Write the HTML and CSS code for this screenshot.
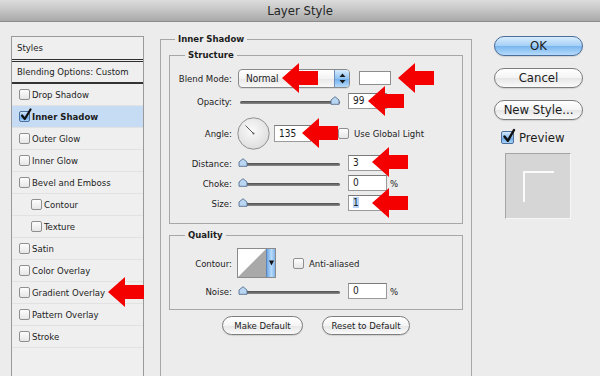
FILE: index.html
```html
<!DOCTYPE html>
<html>
<head>
<meta charset="utf-8">
<title>Layer Style</title>
<link rel="stylesheet" href="styles.css">
</head>
<body>
<div class="window">
  <div class="titlebar">Layer Style</div>
  <div class="content">
    <div class="styles-panel">
      <div class="sp-head">Styles</div>
      <div class="sp-blend">Blending Options: Custom</div>
      <div class="sp-item"><span class="cb"></span>Drop Shadow</div>
      <div class="sp-item selected"><span class="cb checked"><svg class="check" width="12" height="14" viewBox="0 0 12 14"><path d="M2 7.5 L4.8 11 L10.5 1.5" fill="none" stroke="#111" stroke-width="2.2" stroke-linecap="round" stroke-linejoin="round"/></svg></span>Inner Shadow</div>
      <div class="sp-item"><span class="cb"></span>Outer Glow</div>
      <div class="sp-item"><span class="cb"></span>Inner Glow</div>
      <div class="sp-item"><span class="cb"></span>Bevel and Emboss</div>
      <div class="sp-item indent"><span class="cb"></span>Contour</div>
      <div class="sp-item indent"><span class="cb"></span>Texture</div>
      <div class="sp-item"><span class="cb"></span>Satin</div>
      <div class="sp-item"><span class="cb"></span>Color Overlay</div>
      <div class="sp-item"><span class="cb"></span>Gradient Overlay</div>
      <div class="sp-item"><span class="cb"></span>Pattern Overlay</div>
      <div class="sp-item"><span class="cb"></span>Stroke</div>
    </div>

    <fieldset class="group main-group">
      <legend class="legend-main">Inner Shadow</legend>

      <fieldset class="group sub structure">
        <legend class="legend-sub">Structure</legend>
        <div class="row r-blend">
          <span class="lbl">Blend Mode:</span>
          <div class="select">
            <span class="select-text">Normal</span>
            <span class="stepper"><svg width="7" height="11" viewBox="0 0 7 11"><path d="M3.5 0.5 L6.5 4 L0.5 4 Z M3.5 10.5 L6.5 7 L0.5 7 Z" fill="#1a1a1a"/></svg></span>
          </div>
          <span class="color-swatch"></span>
        </div>
        <div class="row r-opacity">
          <span class="lbl">Opacity:</span>
          <div class="slider"><div class="track"></div><svg class="thumb" style="left:92px" width="10" height="9" viewBox="0 0 10 9"><path d="M1 4 L5 0.7 L9 4 L9 8.3 L1 8.3 Z" fill="#b9d6f3" stroke="#56718f" stroke-width="0.9"/></svg></div>
          <span class="field">99</span>
        </div>
        <div class="row r-angle">
          <span class="lbl">Angle:</span>
          <svg class="dial" width="33" height="33" viewBox="0 0 33 33">
            <defs><radialGradient id="dg" cx="0.45" cy="0.4" r="0.65"><stop offset="0" stop-color="#fafafa"/><stop offset="1" stop-color="#dcdcdc"/></radialGradient></defs>
            <circle cx="16.5" cy="16.5" r="15.7" fill="url(#dg)" stroke="#8f8f8f" stroke-width="1"/>
            <line x1="16.5" y1="16.5" x2="8.5" y2="8.5" stroke="#555" stroke-width="1"/>
            <circle cx="16.5" cy="16.5" r="1.1" fill="#666"/>
          </svg>
          <span class="field angle-field">135</span>
          <span class="cb gl-cb"></span>
          <span class="cb-label">Use Global Light</span>
        </div>
        <div class="row r-small r-first">
          <span class="lbl">Distance:</span>
          <div class="slider"><div class="track"></div><svg class="thumb" style="left:0px" width="10" height="9" viewBox="0 0 10 9"><path d="M1 4 L5 0.7 L9 4 L9 8.3 L1 8.3 Z" fill="#b9d6f3" stroke="#56718f" stroke-width="0.9"/></svg></div>
          <span class="field">3</span>
        </div>
        <div class="row r-small">
          <span class="lbl">Choke:</span>
          <div class="slider"><div class="track"></div><svg class="thumb" style="left:0px" width="10" height="9" viewBox="0 0 10 9"><path d="M1 4 L5 0.7 L9 4 L9 8.3 L1 8.3 Z" fill="#b9d6f3" stroke="#56718f" stroke-width="0.9"/></svg></div>
          <span class="field">0</span>
          <span class="pct">%</span>
        </div>
        <div class="row r-small">
          <span class="lbl">Size:</span>
          <div class="slider"><div class="track"></div><svg class="thumb" style="left:0px" width="10" height="9" viewBox="0 0 10 9"><path d="M1 4 L5 0.7 L9 4 L9 8.3 L1 8.3 Z" fill="#b9d6f3" stroke="#56718f" stroke-width="0.9"/></svg></div>
          <span class="field"><span class="sel">1</span></span>
        </div>
      </fieldset>

      <fieldset class="group sub quality">
        <legend class="legend-sub">Quality</legend>
        <div class="row r-contour">
          <span class="lbl">Contour:</span>
          <div class="contour">
            <svg class="contour-curve" width="28" height="28" viewBox="0 0 28 28"><rect width="28" height="28" fill="#fff"/><path d="M0 28 L28 0 L28 28 Z" fill="#a9a9a9"/></svg>
            <span class="contour-drop"><svg width="5" height="6" viewBox="0 0 5 6"><path d="M0 0.5 L5 0.5 L2.5 5.5 Z" fill="#111"/></svg></span>
          </div>
          <span class="cb aa-cb"></span>
          <span class="cb-label">Anti-aliased</span>
        </div>
        <div class="row r-noise">
          <span class="lbl">Noise:</span>
          <div class="slider"><div class="track"></div><svg class="thumb" style="left:0px" width="10" height="9" viewBox="0 0 10 9"><path d="M1 4 L5 0.7 L9 4 L9 8.3 L1 8.3 Z" fill="#b9d6f3" stroke="#56718f" stroke-width="0.9"/></svg></div>
          <span class="field">0</span>
          <span class="pct">%</span>
        </div>
      </fieldset>

      <div class="btn-row">
        <button class="pill small make">Make Default</button>
        <button class="pill small reset">Reset to Default</button>
      </div>
    </fieldset>

    <div class="side">
      <button class="pill big ok">OK</button>
      <button class="pill big">Cancel</button>
      <button class="pill big">New Style...</button>
      <div class="preview-row">
        <span class="cb checked big-cb"><svg class="check" width="14" height="16" viewBox="0 0 14 16"><path d="M2.5 8.5 L5.8 12.8 L12 2" fill="none" stroke="#111" stroke-width="2.4" stroke-linecap="round" stroke-linejoin="round"/></svg></span>
        <span class="preview-label">Preview</span>
      </div>
      <div class="preview-swatch"><div class="preview-inner"></div></div>
    </div>
  </div>

  <svg class="arrow a1" width="36" height="30" viewBox="0 0 36 30"><path d="M0 15 L17 0 L17 8 L36 8 L36 22 L17 22 L17 30 Z" fill="#f40000"/></svg>
  <svg class="arrow a2" width="36" height="30" viewBox="0 0 36 30"><path d="M0 15 L17 0 L17 8 L36 8 L36 22 L17 22 L17 30 Z" fill="#f40000"/></svg>
  <svg class="arrow a3" width="36" height="30" viewBox="0 0 36 30"><path d="M0 15 L17 0 L17 8 L36 8 L36 22 L17 22 L17 30 Z" fill="#f40000"/></svg>
  <svg class="arrow a4" width="36" height="30" viewBox="0 0 36 30"><path d="M0 15 L17 0 L17 8 L36 8 L36 22 L17 22 L17 30 Z" fill="#f40000"/></svg>
  <svg class="arrow a5" width="36" height="30" viewBox="0 0 36 30"><path d="M0 15 L17 0 L17 8 L36 8 L36 22 L17 22 L17 30 Z" fill="#f40000"/></svg>
  <svg class="arrow a6" width="36" height="30" viewBox="0 0 36 30"><path d="M0 15 L17 0 L17 8 L36 8 L36 22 L17 22 L17 30 Z" fill="#f40000"/></svg>
  <svg class="arrow a7" width="36" height="30" viewBox="0 0 36 30"><path d="M0 15 L17 0 L17 8 L36 8 L36 22 L17 22 L17 30 Z" fill="#f40000"/></svg>
</div>
</body>
</html>
```

FILE: styles.css
```css
* { box-sizing: border-box; }
html, body { margin: 0; padding: 0; }
body {
  font-family: "DejaVu Sans Condensed", "DejaVu Sans", sans-serif;
  font-stretch: condensed;
  font-size: 9.5px;
  color: #1c1c1c;
  background: #ececec;
}
.window {
  position: relative;
  width: 600px;
  height: 376px;
  overflow: hidden;
  background: #ececec;
  display: flex;
  flex-direction: column;
}
.titlebar {
  flex: none;
  height: 22px;
  background: linear-gradient(#dcdcdc, #c4c4c4 50%, #a9a9a9);
  border-bottom: 1px solid #8c8c8c;
  text-align: center;
  font-size: 13px;
  line-height: 21px;
  color: #252525;
}
.content {
  flex: 1;
  display: flex;
  align-items: flex-start;
}

/* styles list */
.styles-panel {
  flex: none;
  margin: 14px 0 0 11px;
  width: 133px;
  height: 420px;
  border: 1px solid #9a9a9a;
  background: #efefef;
}
.sp-head {
  height: 25px;
  line-height: 22px;
  padding-left: 5px;
  border-bottom: 3px double #2e2e2e;
}
.sp-blend {
  height: 22px;
  line-height: 20px;
  padding-left: 5px;
  border-bottom: 2px solid #333;
}
.sp-item {
  height: 22px;
  display: flex;
  align-items: center;
  gap: 2px;
  padding-left: 7px;
  border-bottom: 1px solid #e2e2e2;
}
.sp-item.indent { padding-left: 19px; }
.sp-item.selected {
  background: #c6dcf5;
  font-weight: bold;
}

/* checkboxes */
.cb {
  flex: none;
  position: relative;
  width: 11px;
  height: 11px;
  border: 1px solid #8f8f8f;
  border-radius: 2px;
  background: linear-gradient(#fdfdfd, #e6e6e6);
}
.cb.checked {
  background: linear-gradient(#d3e8fc, #89bdf0 50%, #64a4e6 51%, #a9d3f8);
  border-color: #4c6f9c;
}
.cb .check {
  position: absolute;
  left: 0;
  top: -4px;
}
.cb.big-cb { width: 13px; height: 13px; }
.cb-label { margin-left: 5px; }

/* group boxes */
.group {
  margin: 0;
  min-width: 0;
  border: 1px solid #a7a7a7;
}
.group legend {
  font-weight: bold;
  line-height: 12px;
  padding: 0 3px;
}
.main-group {
  flex: none;
  margin: 11px 0 0 16px;
  width: 312px;
  height: 420px;
  padding: 4px 8px 0;
}
.legend-main { margin-left: 6px; }
.sub { padding: 6px 0 10px; }
.legend-sub { margin-left: 15px; }
.quality { margin-top: 5px; padding: 7px 0 9px; }

.row {
  display: flex;
  align-items: center;
}
.lbl {
  flex: none;
  width: 62px;
  margin-right: 5px;
  text-align: right;
}
.r-blend { height: 22px; }
.r-opacity { height: 24px; }
.r-angle { height: 33px; margin-top: 4px; }
.r-small { height: 20px; }
.r-first { margin-top: 3px; }
.r-contour { height: 30px; }
.r-noise { height: 18px; margin-top: 4px; }

.select {
  flex: none;
  margin-left: 1px;
  width: 112px;
  height: 19px;
  display: flex;
  border: 1px solid #8a8a8a;
  border-radius: 4px;
  background: linear-gradient(#ffffff, #f3f3f3 50%, #e8e8e8 51%, #f8f8f8);
  box-shadow: 0 1px 0 rgba(0,0,0,0.08);
}
.select-text {
  flex: 1;
  padding-left: 7px;
  line-height: 17px;
  font-size: 10px;
}
.stepper {
  width: 15px;
  display: flex;
  align-items: center;
  justify-content: center;
  border-left: 1px solid #6f8fbb;
  border-radius: 0 3px 3px 0;
  background: linear-gradient(#d6ebfd, #91c3f2 50%, #6eaceb 51%, #b8dcfa);
}
.color-swatch {
  flex: none;
  margin-left: 9px;
  width: 32px;
  height: 14px;
  background: #fff;
  border: 1px solid #8e8e8e;
}

.slider {
  flex: none;
  position: relative;
  margin-left: 1px;
  width: 102px;
  height: 10px;
}
.track {
  margin: 5px 0 0 2px;
  height: 3px;
  border-radius: 2px;
  background: linear-gradient(#4e4e4e, #8a8a8a);
}
.thumb {
  position: absolute;
  top: 0;
}
.field {
  flex: none;
  margin-left: 8px;
  width: 39px;
  height: 16px;
  padding-left: 4px;
  line-height: 14px;
  font-size: 10px;
  background: #fff;
  border: 1px solid #9a9a9a;
  border-top-color: #7a7a7a;
}
.sel { background: #b7d4f6; }
.pct { margin-left: 3px; }

.dial { flex: none; }
.angle-field { margin-left: 4px; width: 37px; height: 17px; line-height: 15px; }
.gl-cb { margin-left: 27px; }

.contour {
  flex: none;
  display: flex;
  width: 39px;
  height: 30px;
  border: 1px solid #8a8a8a;
}
.contour-curve { display: block; }
.contour-drop {
  flex: 1;
  display: flex;
  align-items: center;
  justify-content: center;
  border-left: 1px solid #5d85b8;
  background: linear-gradient(90deg, #6ea8e6, #b9dcfb 55%, #7fb4ea);
}
.aa-cb { margin-left: 17px; }

.btn-row {
  display: flex;
  justify-content: center;
  gap: 19px;
  margin-top: 6px;
}

/* pill buttons */
.pill {
  font-family: inherit;
  font-stretch: condensed;
  color: #1c1c1c;
  padding: 0;
  margin: 0;
  border: 1px solid #7d7d7d;
  border-radius: 11px;
  background: linear-gradient(#ffffff, #f4f4f4 50%, #e6e6e6 51%, #fafafa);
  box-shadow: 0 1px 1px rgba(0,0,0,0.12);
}
.small { height: 19px; font-size: 9.5px; }
.make { width: 81px; }
.reset { width: 88px; }

.side {
  flex: none;
  margin: 14px 0 0 22px;
  width: 89px;
  display: flex;
  flex-direction: column;
}
.big {
  height: 20px;
  width: 89px;
  font-size: 13px;
  line-height: 18px;
}
.big + .big { margin-top: 12px; }
.ok {
  border-color: #4a6d9c;
  background: linear-gradient(#d8ecfd, #a3cff6 50%, #79b5ee 51%, #b6dcfb);
}
.preview-row {
  display: flex;
  align-items: center;
  margin-top: 11px;
  padding-left: 7px;
  height: 13px;
}
.preview-label {
  margin-left: 5px;
  font-size: 13px;
}
.preview-swatch {
  margin: 9px 0 0 11px;
  width: 66px;
  height: 66px;
  display: flex;
  align-items: center;
  justify-content: center;
  background: #d6d6d6;
  border: 1px solid #f6f6f6;
  border-top-color: #a5a5a5;
  border-left-color: #a5a5a5;
}
.preview-inner {
  width: 31px;
  height: 31px;
  border-top: 2px solid #fbfbfb;
  border-left: 2px solid #fbfbfb;
}

/* annotation arrows (overlay) */
.arrow { position: absolute; }
.a1 { left: 282px; top: 63px; }
.a2 { left: 398px; top: 63px; }
.a3 { left: 368px; top: 86px; }
.a4 { left: 302px; top: 118px; }
.a5 { left: 372px; top: 147px; }
.a6 { left: 372px; top: 188px; }
.a7 { left: 108px; top: 277px; }
```
